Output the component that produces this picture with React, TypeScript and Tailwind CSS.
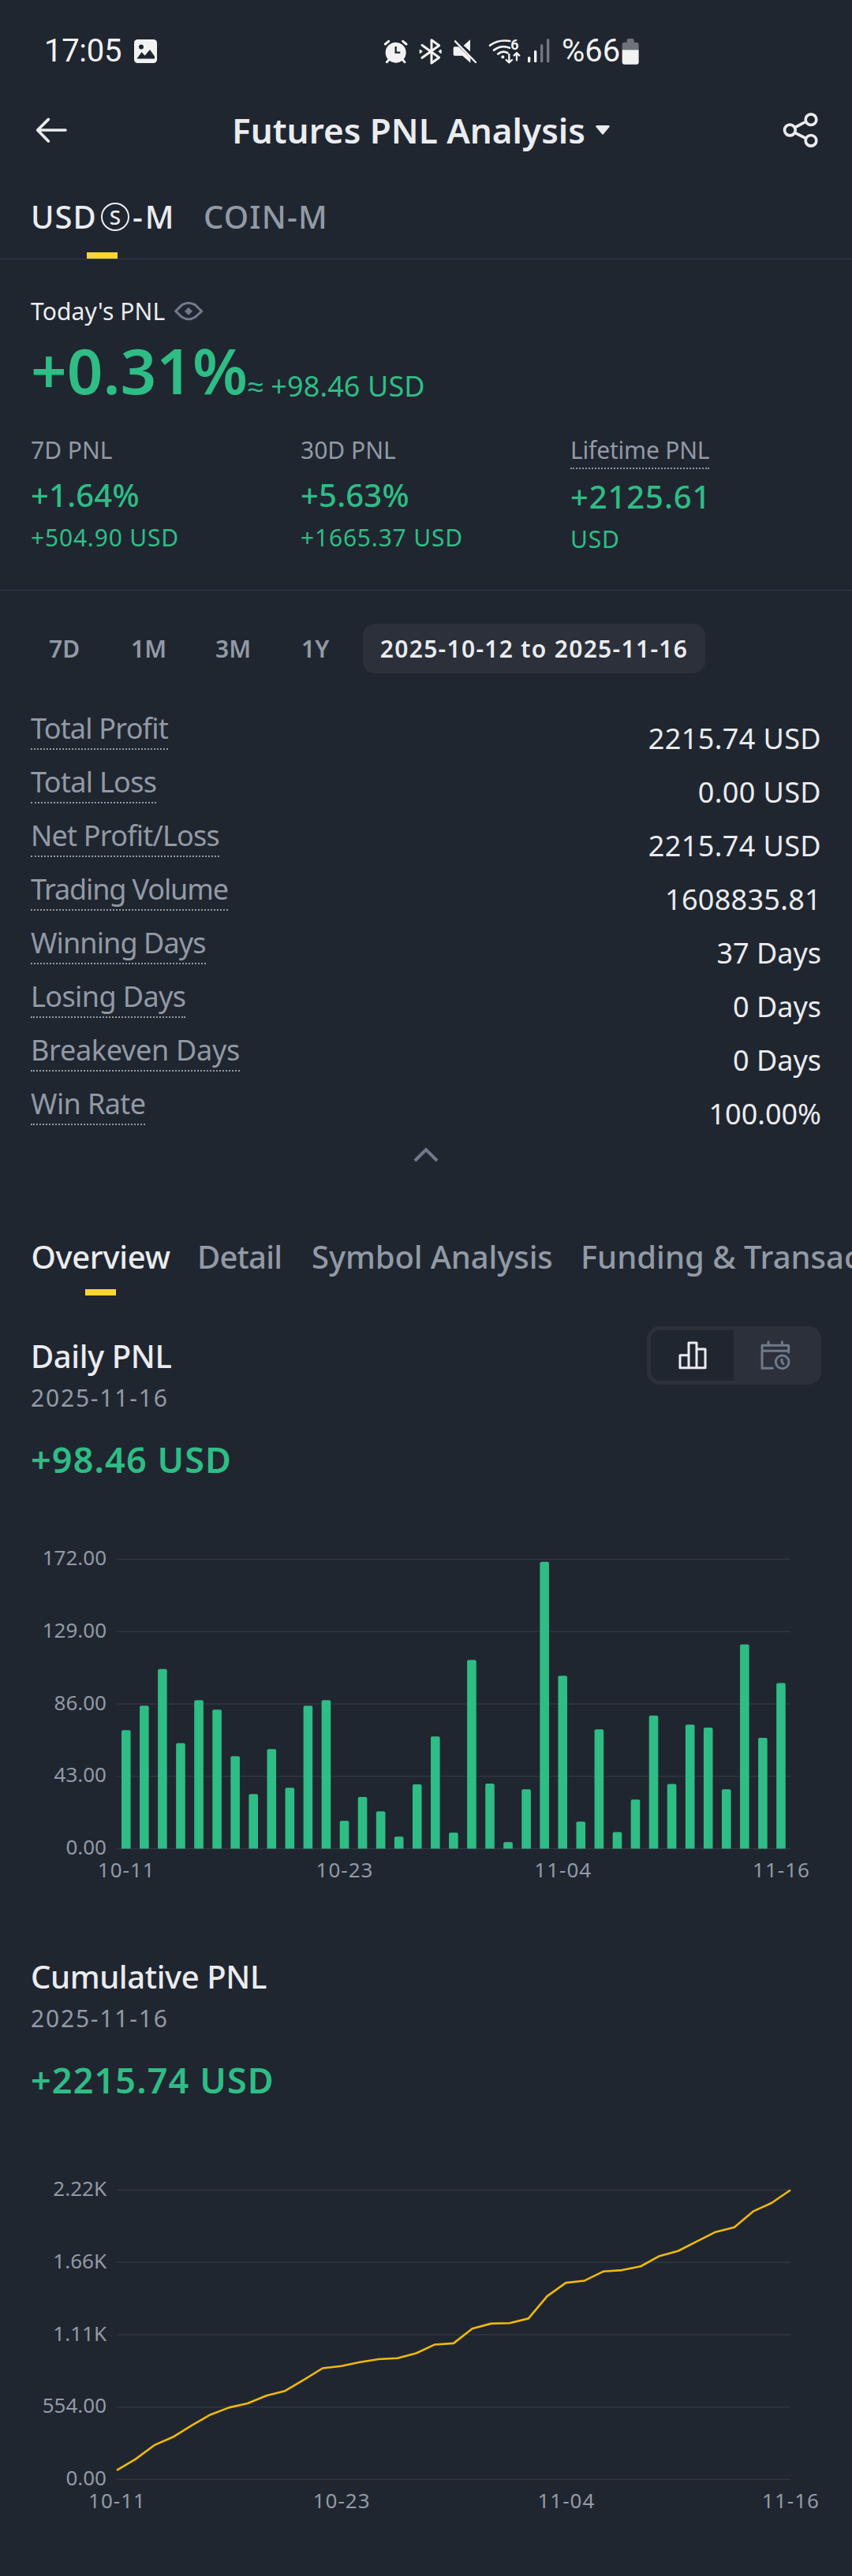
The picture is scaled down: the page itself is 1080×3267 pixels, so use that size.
import React from 'react'

type Stat = { label: string; value: string; sub: string; tracking: string; underline?: boolean }
type Row = { label: string; value: string; labelTracking: string; valueTracking: string }
type Tick = { label: string; index: number }

const stats: Stat[] = [
  { label: '7D PNL', value: '+1.64%', sub: '+504.90 USD', tracking: 'tracking-[0.2px]' },
  { label: '30D PNL', value: '+5.63%', sub: '+1665.37 USD', tracking: 'tracking-[0.2px]' },
  { label: 'Lifetime PNL', value: '+2125.61', sub: 'USD', tracking: 'tracking-[0.9px]', underline: true },
]

const ranges = [
  { label: '7D', width: 'w-[104px]' },
  { label: '1M', width: 'w-[107px]' },
  { label: '3M', width: 'w-[109px]' },
  { label: '1Y', width: 'w-[101px]' },
]

const rows: Row[] = [
  { label: 'Total Profit', value: '2215.74 USD', labelTracking: 'tracking-[-0.8px]', valueTracking: 'tracking-[0.4px]' },
  { label: 'Total Loss', value: '0.00 USD', labelTracking: 'tracking-[-0.7px]', valueTracking: 'tracking-[0.4px]' },
  { label: 'Net Profit/Loss', value: '2215.74 USD', labelTracking: 'tracking-[-0.8px]', valueTracking: 'tracking-[0.4px]' },
  { label: 'Trading Volume', value: '1608835.81', labelTracking: 'tracking-[-1.15px]', valueTracking: 'tracking-[0.3px]' },
  { label: 'Winning Days', value: '37 Days', labelTracking: 'tracking-[-0.9px]', valueTracking: 'tracking-normal' },
  { label: 'Losing Days', value: '0 Days', labelTracking: 'tracking-[-0.6px]', valueTracking: 'tracking-normal' },
  { label: 'Breakeven Days', value: '0 Days', labelTracking: 'tracking-[-0.3px]', valueTracking: 'tracking-normal' },
  { label: 'Win Rate', value: '100.00%', labelTracking: 'tracking-[-0.6px]', valueTracking: 'tracking-normal' },
]

// one entry per day, 10-11 to 11-16
const daily = [
  70.39, 84.91, 106.76, 62.74, 88.19, 82.57, 54.94, 32.46, 59.15, 36.21, 84.91, 88.19, 16.54,
  30.75, 22.16, 7.18, 38.24, 66.65, 9.52, 112.07, 38.71, 3.9, 35.27, 170.44, 102.7, 16.08,
  70.86, 9.83, 29.19, 79.13, 38.4, 73.67, 71.95, 35.27, 121.43, 65.87, 98.46,
]

const cumulative = daily.map((_, i) => daily.slice(0, i + 1).reduce((a, b) => a + b, 0))

const ticks: Tick[] = [
  { label: '10-11', index: 0 },
  { label: '10-23', index: 12 },
  { label: '11-04', index: 24 },
  { label: '11-16', index: 36 },
]

const PLOT_LEFT = 148
const PLOT_RIGHT = 1002

function StatusIcon({ x, w, className = '', children }: { x: number; w: number; className?: string; children: React.ReactNode }) {
  return (
    <svg
      className={`shrink-0 overflow-visible ${className}`}
      viewBox={`${x} 55 ${w} 102`}
      width={w / 3}
      height={34}
      fill="none"
      strokeLinecap="round"
      strokeLinejoin="round"
    >
      {children}
    </svg>
  )
}

function StatusBar() {
  return (
    <div className="flex h-[130px] items-center pl-[56px] font-['Roboto',sans-serif] text-[40px] leading-[48px] text-[#f2f2f2]">
      <span className="w-[98px] tracking-[-0.3px]">17:05</span>
      <svg className="ml-[16px]" width="29" height="30" viewBox="0 0 29 30">
        <rect width="29" height="30" rx="4.5" fill="#f2f2f2" />
        <circle cx="9" cy="9.5" r="3" fill="#202630" />
        <path d="M3.5 24.5 9.5 16l4 4.5L20 13l6 8.5v3z" fill="#202630" />
      </svg>

      <StatusIcon x={78} w={93} className="ml-[287px]">
        <circle cx="125" cy="111" r="39" fill="#f2f2f2" />
        <path d="M85 79 98 68M165 79 152 68M91 147l8-9M159 147l-8-9" stroke="#f2f2f2" strokeWidth="9" />
        <path d="M125 88v23h17" stroke="#202630" strokeWidth="7" strokeLinecap="butt" strokeLinejoin="miter" />
      </StatusIcon>
      <StatusIcon x={213} w={87} className="ml-[14px]">
        <path d="M225 83 290 130 261 151V63l29 21-65 47" stroke="#f2f2f2" strokeWidth="9" />
        <path d="M217 101l8 6-8 6zM297 101l-8 6 8 6z" fill="#f2f2f2" stroke="#f2f2f2" strokeWidth="4" />
      </StatusIcon>
      <StatusIcon x={343} w={93} className="ml-[14px]">
        <path d="M409 62v45L384 84zM350 89h15l45 43v18l-30-27h-30q-5 0-5-5V94q0-5 5-5z" fill="#f2f2f2" />
        <path d="M352 68 430 148" stroke="#f2f2f2" strokeWidth="7" />
      </StatusIcon>
      <StatusIcon x={477} w={123} className="ml-[14px]">
        <path d="M483 84q32-24 76-17M498 102q28-22 60-9M514 116q18-14 36-4" stroke="#f2f2f2" strokeWidth="8" />
        <circle cx="532" cy="128" r="6" fill="#f2f2f2" />
        <text x="562" y="100" fill="#f2f2f2" fontSize="54" fontWeight="700">6</text>
        <path d="M556 118v30M545 139l11 10 11-10M585 140v-26M575 122l10-10 10 10" stroke="#f2f2f2" strokeWidth="7" />
      </StatusIcon>
      <StatusIcon x={625} w={90} className="ml-[8px]">
        <path d="M633 131v13M657 107v37" stroke="#f2f2f2" strokeWidth="10" />
        <path d="M681 84v60M705 63v81" stroke="#73777e" strokeWidth="10" />
      </StatusIcon>
      <span className="ml-[14px] w-[76px]">%66</span>
      <StatusIcon x={988} w={67}>
        <path d="M1008 72V64q0-6 6-6h15q6 0 6 6v8h10q8 0 8 8v21h-63V80q0-8 8-8z" fill="#6f7279" />
        <path d="M990 101h63v46q0 9-9 9h-45q-9 0-9-9z" fill="#f2f2f2" />
      </StatusIcon>
    </div>
  )
}

function Header() {
  return (
    <header className="flex h-[70px] items-center pl-[44px]">
      <svg width="42" height="34" viewBox="42 52 126 102" fill="none" stroke="#eaecef" strokeWidth="11" strokeLinecap="round" strokeLinejoin="round">
        <path d="M159 103H55M94 62 53 103l41 42" />
      </svg>
      <h1 className="ml-[208px] w-[451px] whitespace-nowrap text-[44px] font-semibold leading-[56px]">Futures PNL Analysis</h1>
      <svg className="ml-[10px]" width="18" height="12" viewBox="0 0 18 12" fill="#eaecef">
        <path d="M1.5 0h15q2 .5 1 2L10 11q-1 1-2 0L.5 2Q-.5.5 1.5 0z" />
      </svg>
      <svg className="ml-[219px]" width="46" height="46" viewBox="785 64 138 138" fill="none" stroke="#eaecef" strokeWidth="11">
        <circle cx="813" cy="133" r="20.5" />
        <circle cx="893" cy="93" r="20.5" />
        <circle cx="893" cy="173" r="20.5" />
        <path d="M832 123 875 100M832 143l43 22" />
      </svg>
    </header>
  )
}

function MarginTabs() {
  return (
    <nav className="flex h-[129px] border-b border-[#333b47] pl-[39px] pt-[48px] text-[40px] font-medium leading-[54px]">
      <div className="flex w-[181px] flex-col items-center">
        <div className="flex items-center self-start whitespace-nowrap">
          <span className="w-[89px] tracking-[1px]">USD</span>
          <span className="flex h-[36px] w-[36px] shrink-0 items-center justify-center rounded-full border-2 border-[#eaecef] text-[26px] leading-none">S</span>
          <span className="ml-[4px] tracking-[3px]">-M</span>
        </div>
        <div className="mt-[18px] h-2 w-[39px] bg-[#fcd535]" />
      </div>
      <span className="ml-[38px] tracking-[1.2px] text-[#929aa5]">COIN-M</span>
    </nav>
  )
}

function Summary() {
  return (
    <section className="h-[420px] border-b border-[#333b47] px-[39px] pt-[46px]">
      <div className="flex items-center text-[30px] leading-[40px]">
        <span className="tracking-[0.1px]">Today's PNL</span>
        <svg className="ml-[11px]" width="38.7" height="27.3" viewBox="574 756 116 82" fill="none">
          <path d="M582 797 606 773q25-15 50 0l25 24-25 23q-25 15-50 0z" stroke="#707a8a" strokeWidth="9" strokeLinejoin="round" />
          <path d="M631 782l15 15-15 15-15-15z" fill="#707a8a" />
        </svg>
      </div>
      <div className="mt-[6px] flex items-end text-[#2ebd85]">
        <span className="w-[275px] text-[80px] font-semibold leading-[96px]">+0.31%</span>
        <span className="text-[36px] leading-[55px] tracking-[0.1px]">≈ +98.46 USD</span>
      </div>
      <div className="mt-[34px] grid grid-cols-[342px_342px_1fr]">
        {stats.map(s => (
          <div key={s.label} className="flex flex-col items-start text-[#2ebd85]">
            {s.underline ? (
              <span className="mb-[10px] border-b-2 border-dotted border-[#929aa5] pb-[2px] text-[30px] leading-[40px] tracking-[-0.2px] text-[#929aa5]">
                {s.label}
              </span>
            ) : (
              <span className="mb-[12px] text-[30px] leading-[40px] text-[#929aa5]">{s.label}</span>
            )}
            <span className={`text-[40px] font-medium leading-[50px] ${s.tracking}`}>{s.value}</span>
            <span className="mt-[9px] text-[30px] leading-[40px] tracking-[0.8px]">{s.sub}</span>
          </div>
        ))}
      </div>
    </section>
  )
}

function RangePicker() {
  return (
    <div className="mt-[42px] flex h-[63px] items-center pl-[39px] text-[30px] font-semibold leading-[40px]">
      {ranges.map(r => (
        <span key={r.label} className={`pl-[23px] text-[#929aa5] ${r.width}`}>{r.label}</span>
      ))}
      <span className="flex h-[63px] w-[434px] items-center justify-center whitespace-nowrap rounded-[15px] bg-[#2b303b] tracking-[1.3px]">
        2025-10-12 to 2025-11-16
      </span>
    </div>
  )
}

function Totals() {
  return (
    <div className="mt-[45px] px-[39px] text-[36px] leading-[48px]">
      {rows.map(r => (
        <div key={r.label} className="flex h-[68px] items-start justify-between pt-px">
          <span className={`border-b-2 border-dotted border-[#929aa5] pb-px text-[#929aa5] ${r.labelTracking}`}>{r.label}</span>
          <span className={`mt-[13px] ${r.valueTracking}`}>{r.value}</span>
        </div>
      ))}
      <svg className="mx-auto mt-[11px]" width="34" height="21" viewBox="0 0 34 21" fill="none" stroke="#707a8a" strokeWidth="4">
        <path d="M3 18 17 4l14 14" />
      </svg>
    </div>
  )
}

function SectionTabs() {
  return (
    <nav className="mt-[91px] flex h-[77px] overflow-hidden whitespace-nowrap pl-[39px] pt-px text-[40px] font-medium leading-[54px] text-[#929aa5]">
      <div className="flex w-[177px] shrink-0 flex-col items-center">
        <span className="tracking-[-0.3px] text-[#eaecef]">Overview</span>
        <div className="mt-[14px] h-2 w-[39px] bg-[#fcd535]" />
      </div>
      <span className="ml-[34px] w-[145px] shrink-0 tracking-[-0.8px]">Detail</span>
      <span className="w-[341px] shrink-0 tracking-[-0.1px]">Symbol Analysis</span>
      <span className="shrink-0">Funding &amp; Transaction</span>
    </nav>
  )
}

function ChartToggle() {
  return (
    <div className="flex h-[74px] w-[221px] rounded-[16px] bg-[#2b303b] p-[5px]">
      <div className="flex w-[105px] items-center justify-center rounded-l-[12px] bg-[#202630]">
        <svg width="38" height="38" viewBox="144 91 114 114" fill="none" stroke="#eaecef" strokeWidth="9" strokeLinejoin="round">
          <path d="M153 195v-48h33v48zM186 195v-95h30v95zM216 195v-71h33v71z" />
        </svg>
      </div>
      <div className="flex w-[106px] items-center justify-center">
        <svg width="38" height="38" viewBox="463 91 114 114" fill="none" stroke="#707a8a" strokeWidth="9" strokeLinecap="round" strokeLinejoin="round">
          <path d="M509 197h-40V110h101v26M469 131h101M493 96v14M545 96v14" />
          <circle cx="546" cy="173" r="25" />
          <path d="M544 163v10l6 7" />
        </svg>
      </div>
    </div>
  )
}

type PanelProps = {
  title: string
  value: string
  toggle?: boolean
  children: React.ReactNode
}

function ChartPanel({ title, value, toggle, children }: PanelProps) {
  return (
    <section>
      <div className="flex h-[196px] items-start justify-between px-[39px]">
        <div className="pt-[11px]">
          <h2 className="text-[40px] font-medium leading-[54px] tracking-[-0.4px]">{title}</h2>
          <div className="mt-[6px] text-[30px] leading-[40px] tracking-[1.8px] text-[#929aa5]">2025-11-16</div>
          <div className="mt-[30px] text-[45px] font-semibold leading-[56px] tracking-[1.1px] text-[#2ebd85]">{value}</div>
        </div>
        {toggle && <ChartToggle />}
      </div>
      {children}
    </section>
  )
}

type AxesProps = { top: number; bottom: number; labels: string[]; labelY: number; x: (i: number) => number }

function Axes({ top, bottom, labels, labelY, x }: AxesProps) {
  return (
    <>
      {labels.map((label, i) => {
        const y = top + ((bottom - top) * i) / (labels.length - 1)
        return (
          <g key={label}>
            <line x1={PLOT_LEFT} x2={PLOT_RIGHT} y1={y} y2={y} stroke="#303641" strokeWidth="1.5" />
            <text x="135" y={y + 7.5} textAnchor="end" fill="#929aa5" fontSize="26">{label}</text>
          </g>
        )
      })}
      {ticks.map(t => (
        <text key={t.label} x={x(t.index) + 0.5} y={labelY} textAnchor="middle" fill="#929aa5" fontSize="26" letterSpacing="1">{t.label}</text>
      ))}
    </>
  )
}

function DailyChart() {
  const top = 99.5
  const bottom = 466.5
  const x = (i: number) => 159.8 + i * 23.06
  return (
    <svg className="block" width="1080" height="591" viewBox="0 0 1080 591">
      <Axes top={top} bottom={bottom} labelY={503} x={x} labels={['172.00', '129.00', '86.00', '43.00', '0.00']} />
      {daily.map((v, i) => {
        const h = (v / 172) * (bottom - top)
        const left = x(i) - 5.8
        return (
          <path
            key={i}
            d={`M${left} ${bottom}v${-(h - 2)}q0-2 2-2h7.6q2 0 2 2v${h - 2}z`}
            fill="#2ebd85"
          />
        )
      })}
    </svg>
  )
}

function CumulativeChart() {
  const top = 112.4
  const bottom = 479.6
  const x = (i: number) => PLOT_LEFT + (i * (PLOT_RIGHT - PLOT_LEFT)) / 36
  const points = cumulative.map((v, i) => `${x(i)},${bottom - (v / 2216) * (bottom - top)}`).join(' ')
  return (
    <svg className="block" width="1080" height="602" viewBox="0 0 1080 602">
      <Axes top={top} bottom={bottom} labelY={516} x={x} labels={['2.22K', '1.66K', '1.11K', '554.00', '0.00']} />
      <polyline points={points} fill="none" stroke="#f0b90b" strokeWidth="2.6" strokeLinejoin="round" />
    </svg>
  )
}

export default function App() {
  return (
    <div className="h-[3267px] w-[1080px] overflow-hidden bg-[#202630] font-['Noto_Sans',sans-serif] text-[#eaecef]">
      <StatusBar />
      <Header />
      <MarginTabs />
      <Summary />
      <RangePicker />
      <Totals />
      <SectionTabs />
      <div className="mt-[39px]">
        <ChartPanel title="Daily PNL" value="+98.46 USD" toggle>
          <DailyChart />
        </ChartPanel>
        <ChartPanel title="Cumulative PNL" value="+2215.74 USD">
          <CumulativeChart />
        </ChartPanel>
      </div>
    </div>
  )
}
